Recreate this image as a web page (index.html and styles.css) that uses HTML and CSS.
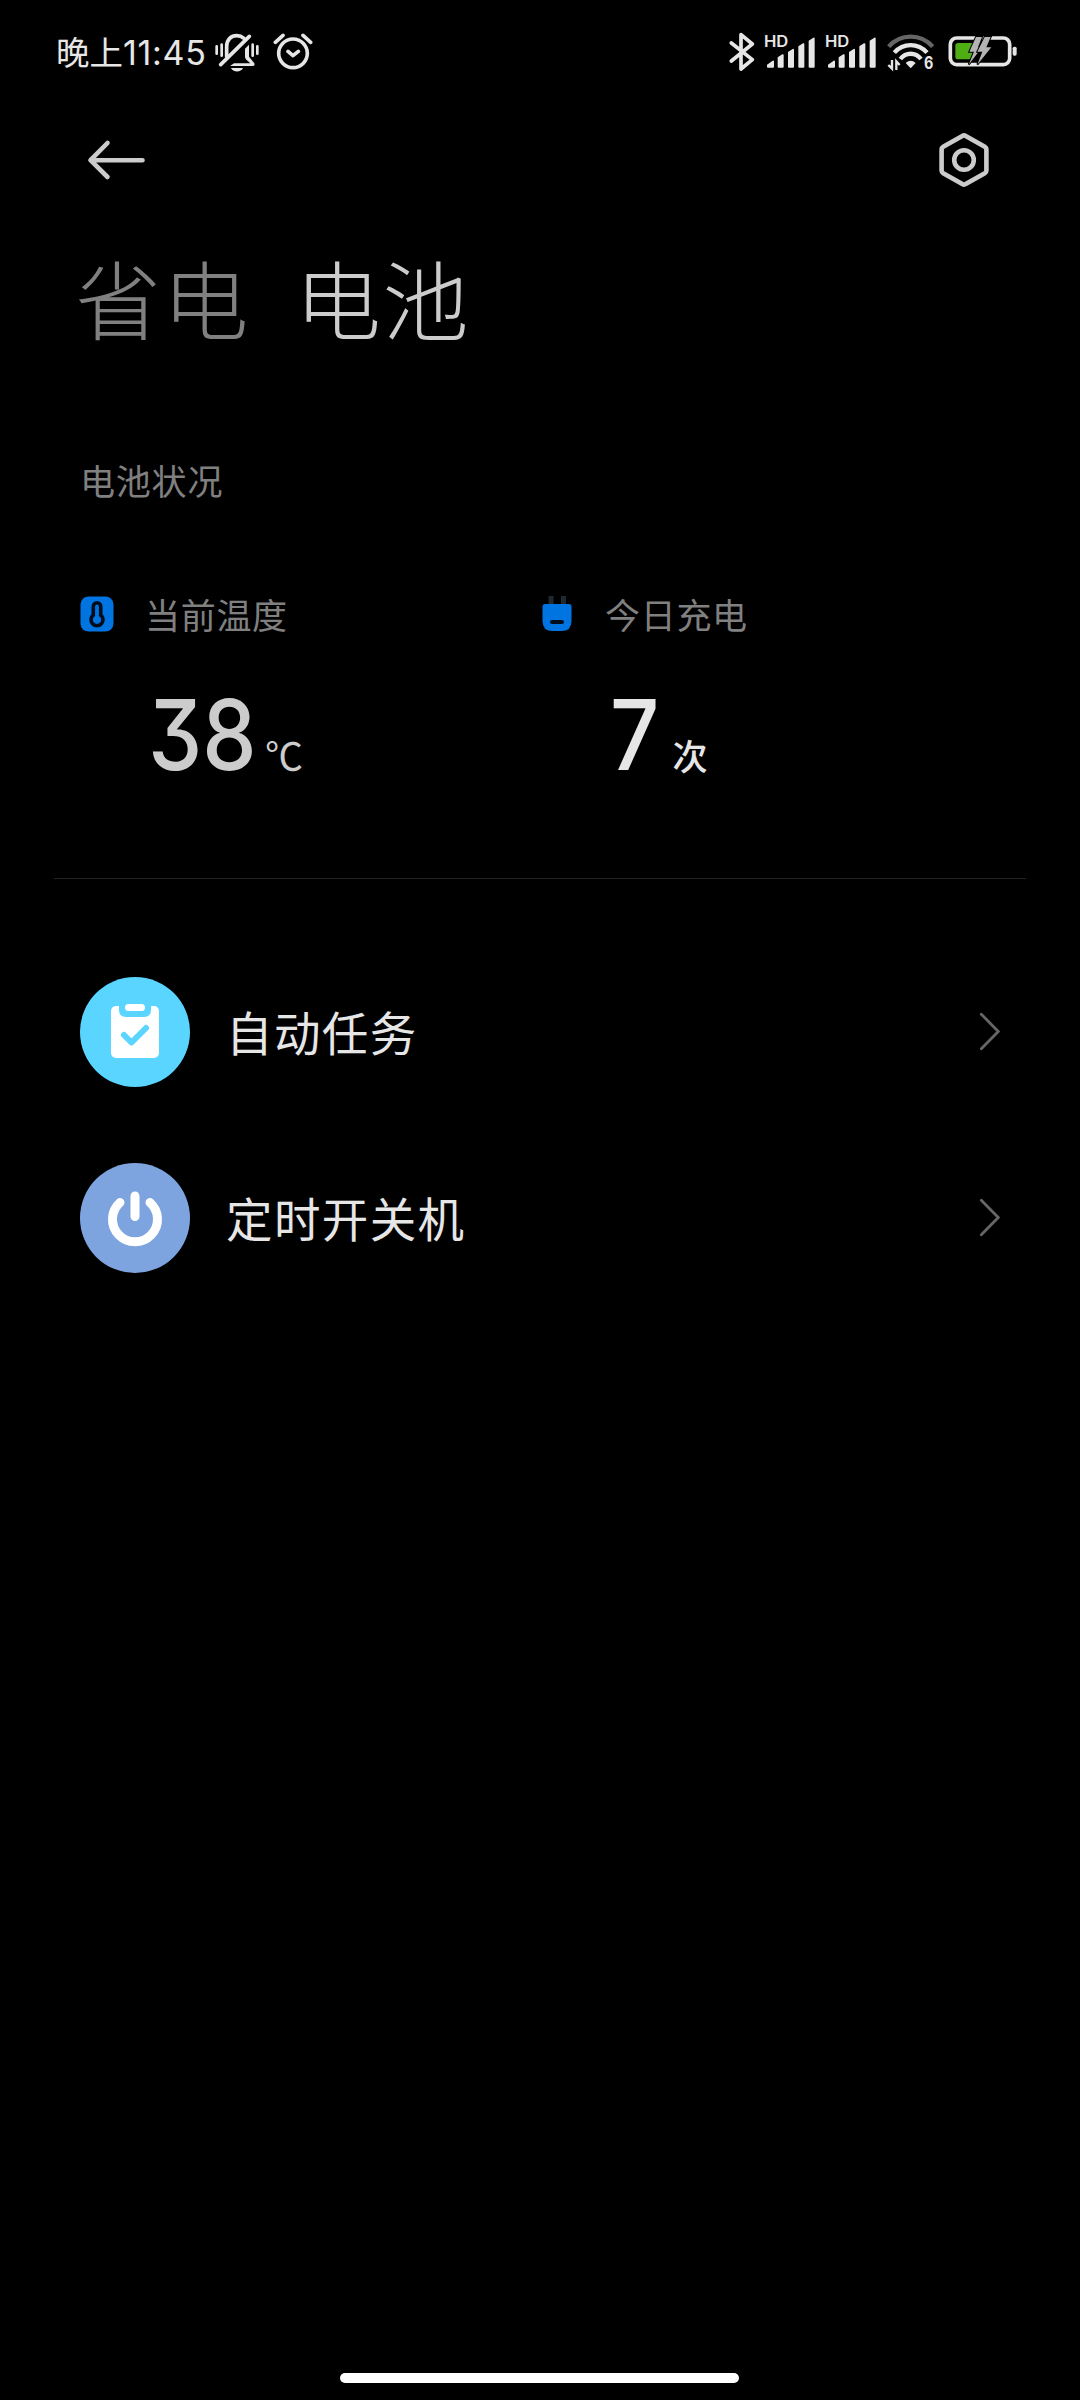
FILE: index.html
```html
<!DOCTYPE html>
<html lang="zh-CN">
<head>
  <meta charset="UTF-8">
  <title>电池</title>
  <link rel="stylesheet" href="styles.css">
</head>
<body>
  <div class="screen">

    <!-- Status bar -->
    <div class="status-bar">
      <div class="status-left">
        <span class="clock">晚上<span class="clock-num">11:45</span></span>
        <svg class="ic-bell" width="46" height="40" viewBox="0 0 138 120" fill="none" stroke="#e6e6e6" stroke-linecap="round">
          <path d="M8 43v22M23 38v33M116 38v33M130 43v22" stroke-width="8"/>
          <path d="M38 74V44C38 22 52 11 68 11c9 0 16 3 22 8" stroke-width="11"/>
          <path d="M106 13L20 98" stroke-width="11"/>
          <path d="M105 38L93 50v24c0 9 12 15 16 20H60L48 102h70q6-2 3-8l-16-20z" fill="#e6e6e6" stroke="none"/>
          <path d="M51 108h36c-5 14-31 14-36 0z" fill="#e6e6e6" stroke="none"/>
        </svg>
        <svg class="ic-alarm" width="40" height="40" viewBox="0 0 120 120" fill="none" stroke="#e6e6e6" stroke-width="11" stroke-linecap="round" stroke-linejoin="round">
          <circle cx="60" cy="64" r="43"/>
          <path d="M7 31l23-21M90 10l23 21M45 58l15 13 16-13"/>
        </svg>
      </div>
      <div class="status-right">
        <svg class="ic-bt" width="26" height="40" viewBox="0 0 78 120" fill="none" stroke="#e6e6e6" stroke-width="11" stroke-linejoin="round" stroke-linecap="round">
          <path d="M7 33l63 50-34 28V8l34 28L7 87"/>
        </svg>
        <svg class="ic-signal" width="52" height="40" viewBox="0 0 156 120" fill="#e6e6e6">
          <text x="3" y="44" class="hd-text" textLength="73" lengthAdjust="spacingAndGlyphs">HD</text>
          <path d="M12 98l17-12q4-2 4 3v15q0 3-3 3H15q-3 0-3-3zM44 76l14-9q4-2 4 3v34q0 3-3 3H47q-3 0-3-3zM75 60l14-9q4-2 4 3v50q0 3-3 3H78q-3 0-3-3zM106 43l14-9q4-2 4 3v67q0 3-3 3h-12q-3 0-3-3zM137 26l14-9q4-2 4 3v84q0 3-3 3h-12q-3 0-3-3z"/>
        </svg>
        <svg class="ic-signal" width="52" height="40" viewBox="0 0 156 120" fill="#e6e6e6">
          <text x="3" y="44" class="hd-text" textLength="73" lengthAdjust="spacingAndGlyphs">HD</text>
          <path d="M12 98l17-12q4-2 4 3v15q0 3-3 3H15q-3 0-3-3zM44 76l14-9q4-2 4 3v34q0 3-3 3H47q-3 0-3-3zM75 60l14-9q4-2 4 3v50q0 3-3 3H78q-3 0-3-3zM106 43l14-9q4-2 4 3v67q0 3-3 3h-12q-3 0-3-3zM137 26l14-9q4-2 4 3v84q0 3-3 3h-12q-3 0-3-3z"/>
        </svg>
        <svg class="ic-wifi" width="48" height="40" viewBox="0 0 144 120" fill="none" stroke="#e6e6e6" stroke-width="13">
          <path d="M5 44C41 4 101 4 137 44" stroke="#666"/>
          <path d="M22 62c27-30 71-30 98 0"/>
          <path d="M40 81c17-21 45-21 62 0"/>
          <path d="M56 93q15-14 30 0L71 109z" fill="#e6e6e6" stroke="none"/>
          <path d="M15 84v26L4 99M28 114V88l10 11" stroke-width="7"/>
          <text x="111" y="112" class="wifi-text" textLength="28" lengthAdjust="spacingAndGlyphs">6</text>
        </svg>
        <svg class="ic-battery" width="69" height="40" viewBox="0 0 207 120" fill="none">
          <rect x="7" y="18" width="178" height="80" rx="19" stroke="#e6e6e6" stroke-width="11"/>
          <rect x="22" y="33" width="56" height="49" rx="8" fill="#4fae14"/>
          <path class="bolt" d="M84 15h18L90 46h12L62 98l16-39H64z"/>
          <path class="bolt" d="M110 15h18l-13 31h15L88 98l15-39H88z"/>
          <rect x="194" y="44" width="12" height="27" rx="5" fill="#e6e6e6"/>
        </svg>
      </div>
    </div>

    <!-- Header -->
    <div class="header">
      <svg class="back" width="60" height="42" viewBox="0 0 60 42" fill="none" stroke="#ccc" stroke-width="4.6" stroke-linecap="round" stroke-linejoin="round">
        <path d="M20.500 4L3.500 21.200 20.500 38M4 21.200h51.500"/>
      </svg>
      <svg class="settings" width="52" height="56" viewBox="0 0 52 56" fill="none" stroke="#ccc" stroke-width="4.600" stroke-linejoin="round">
        <path d="M24.300 3.900q1.700-1 3.400 0l19.100 10.800q1.600 1 1.600 2.800v21q0 1.800-1.600 2.800L27.700 52.100q-1.700 1-3.400 0L5.200 41.300q-1.600-1-1.600-2.800v-21q0-1.800 1.600-2.800z"/>
        <circle cx="26" cy="28" r="9.800"/>
      </svg>
    </div>

    <div class="tabs">
      <span class="tab">省电</span>
      <span class="tab active">电池</span>
    </div>

    <!-- Battery status -->
    <div class="section-title">电池状况</div>

    <div class="metrics">
      <div class="metric">
        <div class="metric-label">
          <svg width="34" height="36" viewBox="0 0 34 36">
            <rect x="0.500" y="0.500" width="33" height="35" rx="8" fill="#0074e0"/>
            <path d="M13.300 19V10.500a3.700 3.700 0 0 1 7.400 0V19a6 6 0 1 1-7.400 0z" fill="#0074e0" stroke="#000d1c" stroke-width="3.600"/>
          </svg>
          <span>当前温度</span>
        </div>
        <div class="metric-value temp"><span class="num">38</span><span class="unit-c">℃</span></div>
      </div>
      <div class="metric">
        <div class="metric-label">
          <svg width="34" height="36" viewBox="0 0 34 36">
            <path d="M8.500 0h5v9h-5zM21 0h5v9h-5z" fill="#22282f"/>
            <path d="M5 8h24q2.500 0 2.500 2.500V25q0 10-10 10h-9q-10 0-10-10V10.500Q2.500 8 5 8z" fill="#0074e0"/>
            <rect x="10" y="24" width="14" height="4" rx="2" fill="#000d1c"/>
          </svg>
          <span>今日充电</span>
        </div>
        <div class="metric-value count"><span class="num">7</span><span class="unit">次</span></div>
      </div>
    </div>

    <div class="divider"></div>

    <!-- List -->
    <div class="list">
      <div class="row">
        <svg class="row-icon" width="110" height="110" viewBox="0 0 110 110">
          <circle cx="55" cy="55" r="55" fill="#5ad5ff"/>
          <rect x="31" y="29" width="48" height="52" rx="5" fill="#fff"/>
          <path d="M39 25h32v8q0 7-7 7H46q-7 0-7-7z" fill="#5ad5ff"/>
          <rect x="45" y="27" width="20" height="7" rx="3.500" fill="#fff"/>
          <path d="M44 58l7.500 7.500L66 51" fill="none" stroke="#5ad5ff" stroke-width="6" stroke-linecap="round" stroke-linejoin="round"/>
        </svg>
        <span class="row-text">自动任务</span>
        <svg class="chevron" width="22" height="40" viewBox="0 0 22 40" fill="none" stroke="#666" stroke-width="2.800" stroke-linecap="round">
          <path d="M2.300 2.200L19.300 19.500 2.300 36.800"/>
        </svg>
      </div>
      <div class="row">
        <svg class="row-icon" width="110" height="110" viewBox="0 0 110 110">
          <circle cx="55" cy="55" r="55" fill="#7ea4e0"/>
          <path d="M40 39.500a22.500 22.500 0 1 0 30 0M55 33v20.500" fill="none" stroke="#fff" stroke-width="9" stroke-linecap="round"/>
        </svg>
        <span class="row-text">定时开关机</span>
        <svg class="chevron" width="22" height="40" viewBox="0 0 22 40" fill="none" stroke="#666" stroke-width="2.800" stroke-linecap="round">
          <path d="M2.300 2.200L19.300 19.500 2.300 36.800"/>
        </svg>
      </div>
    </div>

    <div class="home-bar"></div>
  </div>
</body>
</html>
```
FILE: styles.css
```css
* {
  box-sizing: border-box;
}

body {
  margin: 0;
  background: #000;
  font-family: Inter, "Noto Sans CJK SC", sans-serif;
}

svg {
  display: block;
  flex-shrink: 0;
}

.screen {
  width: 1080px;
  height: 2400px;
  display: flex;
  flex-direction: column;
  background: #000;
}

/* status bar */
.status-bar {
  height: 104px;
  padding: 0 62.700px 0 56px;
  display: flex;
  align-items: center;
  justify-content: space-between;
  color: #e6e6e6;
}

.status-left, .status-right {
  display: flex;
  align-items: center;
}

.clock {
  width: 158px;
  padding-top: 2px;
  font-size: 33.500px;
  line-height: 40px;
  white-space: nowrap;
}

.clock-num {
  font-size: 34px;
  letter-spacing: 0.700px;
}

.ic-alarm {
  margin-left: 13px;
}

.ic-signal {
  margin-left: 8.400px;
}

.ic-wifi {
  margin-left: 11.600px;
}

.ic-battery {
  margin-left: 13px;
}

.hd-text {
  font-size: 46px;
  font-weight: 600;
}

.wifi-text {
  font-size: 50px;
  font-weight: 700;
  fill: #e6e6e6;
  stroke: none;
}

.bolt {
  fill: #b4b4b4;
  stroke: #000;
  stroke-width: 6px;
  paint-order: stroke;
}

/* header */
.header {
  height: 112px;
  padding: 0 90px 0 87px;
  display: flex;
  align-items: center;
  justify-content: space-between;
}

.tabs {
  height: 170px;
  padding: 2px 0 0 75px;
  display: flex;
  gap: 45px;
  font-size: 86px;
  font-weight: 300;
  line-height: 170px;
  letter-spacing: 1.500px;
  color: #808080;
}

.tab.active {
  color: #ccc;
}

.section-title {
  margin-top: 71px;
  padding-left: 80px;
  font-size: 35px;
  line-height: 50px;
  letter-spacing: 0.800px;
  color: #808080;
}

/* metrics */
.metrics {
  margin-top: 82px;
  padding: 0 80px;
  display: grid;
  grid-template-columns: 460px 460px;
}

.metric-label {
  height: 50px;
  display: flex;
  align-items: center;
  gap: 31px;
  font-size: 35px;
  letter-spacing: 0.700px;
  color: #808080;
}

.metric-label span {
  margin-top: -2px;
}

.metric-value {
  height: 150px;
  margin-top: 6px;
  padding-left: 68px;
  display: flex;
  align-items: baseline;
  line-height: 180px;
}

/* narrow digits with a flat-top three */
.num {
  font-size: 97px;
  font-weight: 450;
  font-feature-settings: "cv09";
  transform: scaleX(0.89);
  transform-origin: 0 50%;
}

.temp {
  color: #ccc;
}

.count {
  padding-left: 70px;
  color: #e6e6e6;
}

.unit-c {
  margin-left: -5px;
  font-family: "Noto Sans CJK SC", sans-serif;
  font-size: 38px;
}

.unit {
  margin: -2px 0 0 7px;
  font-size: 35px;
  font-weight: 500;
}

.divider {
  height: 1px;
  margin: 83px 54px 0;
  background: #222;
}

/* list */
.list {
  padding: 60px 79px 0 80px;
}

.row {
  height: 186px;
  display: flex;
  align-items: center;
}

.row-text {
  flex: 1;
  margin: -3px 0 0 36px;
  font-size: 46.500px;
  font-weight: 400;
  letter-spacing: 1.400px;
  color: #e6e6e6;
}

.home-bar {
  width: 399px;
  height: 10px;
  margin: auto 341px 17px 340px;
  border-radius: 5px;
  background: #fff;
}
```
